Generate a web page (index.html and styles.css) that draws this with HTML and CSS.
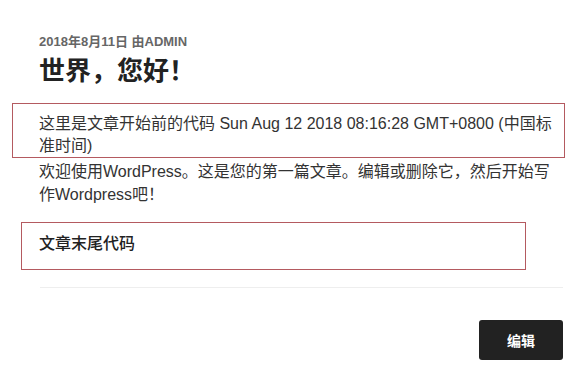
FILE: index.html
```html
<!DOCTYPE html>
<html lang="zh-CN">
<head>
<meta charset="utf-8">
<title>世界，您好！</title>
<link rel="stylesheet" href="styles.css">
</head>
<body>
<article class="post">
  <header class="post-header">
    <div class="post-meta">2018年8月11日 由ADMIN</div>
    <h1 class="post-title">世界，您好！</h1>
  </header>
  <div class="post-content">
    <div class="code-box code-before">这里是文章开始前的代码 Sun Aug 12 2018 08:16:28 GMT+0800 (中国标准时间)</div>
    <p class="post-text">欢迎使用WordPress。这是您的第一篇文章。编辑或删除它，然后开始写作Wordpress吧！</p>
    <div class="code-box code-after">文章末尾代码</div>
  </div>
  <hr class="divider">
  <div class="post-actions">
    <a class="edit-btn" href="#">编辑</a>
  </div>
</article>
</body>
</html>
```

FILE: styles.css
```css
html, body {
  margin: 0;
  padding: 0;
  background: #ffffff;
}

body {
  font-family: "Liberation Sans", "Noto Sans CJK SC", sans-serif;
  color: #333333;
}

.post {
  padding: 34px 10px 0 39px;
}

.post-meta {
  font-size: 13px;
  line-height: 16px;
  font-weight: 700;
  color: #666666;
}

.post-title {
  margin: 5px 0 0;
  font-size: 26px;
  line-height: 32px;
  font-weight: 700;
  color: #222222;
}

.post-content {
  font-size: 16px;
  line-height: 22px;
}

.code-box {
  border: 1px solid #b45a60;
}

.code-before {
  margin: 16px -2px 0 -27px;
  padding: 9px 1px 0 26px;
}

.post-text {
  margin: 2px 0 0;
  line-height: 23px;
}

.code-after {
  margin: 16px 37px 0 -18px;
  padding: 10px 0 14px 17px;
  font-weight: 500;
  color: #222222;
}

.divider {
  margin: 17px 0 0 1px;
  border: 0;
  border-top: 1px solid #eeeeee;
  height: 0;
}

.post-actions {
  display: flex;
  justify-content: flex-end;
  padding-top: 32px;
}

.edit-btn {
  display: flex;
  align-items: center;
  justify-content: center;
  width: 84px;
  height: 40px;
  background: #222222;
  color: #ffffff;
  border-radius: 3px;
  font-size: 14px;
  font-weight: 700;
  text-decoration: none;
}
```
